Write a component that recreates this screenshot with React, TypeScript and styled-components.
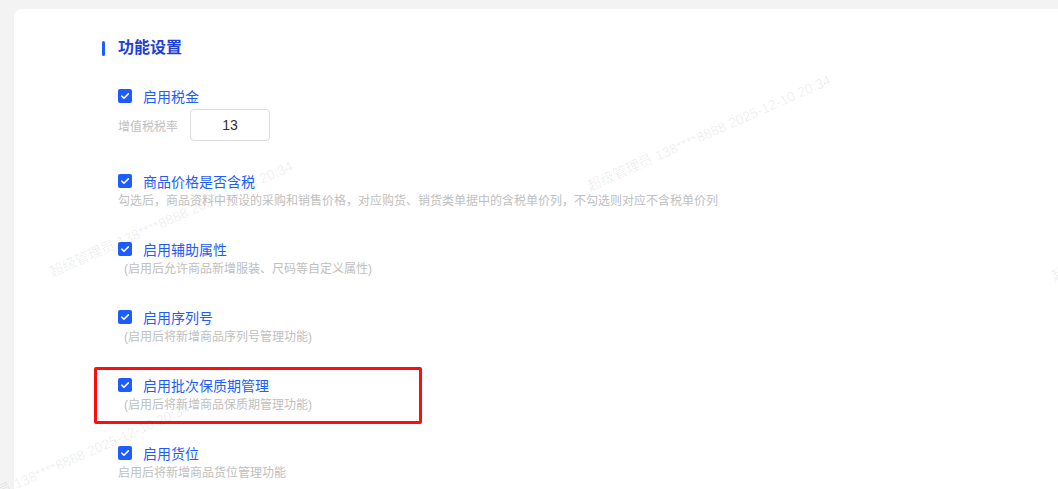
import React from 'react';
import styled, { createGlobalStyle } from 'styled-components';

const GlobalStyle = createGlobalStyle`
  html, body {
    margin: 0;
    padding: 0;
    background: #f3f3f3;
    overflow: hidden;
  }
  body {
    font-family: "Liberation Sans", "Noto Sans CJK SC", sans-serif;
  }
`;

const Page = styled.div`
  position: relative;
  height: 489px;
  padding: 9px 0 0 14px;
  box-sizing: border-box;
  overflow: hidden;
`;

const Card = styled.section`
  background: #ffffff;
  border-radius: 8px 0 0 0;
  height: 100%;
  padding: 27px 0 0 88px;
  box-sizing: border-box;
`;

const SectionTitle = styled.h2`
  margin: 0;
  display: flex;
  align-items: center;
  gap: 13px;
  font-size: 16px;
  line-height: 24px;
  font-weight: 600;
  color: #1e3fd6;

  &::before {
    content: '';
    width: 3px;
    height: 15px;
    border-radius: 2px;
    background: #1d5cff;
  }
`;

const ItemList = styled.div`
  margin-top: 26px;
  padding-left: 16px;
  display: flex;
  flex-direction: column;
  gap: 28px;
`;

const Item = styled.div`
  position: relative;
  display: flex;
  flex-direction: column;
`;

const CheckLine = styled.label`
  display: flex;
  align-items: center;
  gap: 11px;
  height: 20px;
  font-size: 14px;
  color: #1d5cff;
`;

const Box = styled.span`
  width: 14px;
  height: 14px;
  border-radius: 2px;
  background: #1d5cff;
  display: flex;
  align-items: center;
  justify-content: center;
  flex: none;
`;

const Desc = styled.div<{ $indent?: number }>`
  font-size: 12px;
  line-height: 20px;
  color: #c0c0c0;
  padding-left: ${p => p.$indent ?? 0}px;
  white-space: nowrap;
`;

const TaxRow = styled.div`
  display: flex;
  align-items: center;
  gap: 12px;
  margin-top: 3px;
  margin-bottom: 2px;
`;

const TaxLabel = styled.span`
  font-size: 12px;
  color: #c0c0c0;
`;

const TaxInput = styled.input`
  width: 80px;
  height: 32px;
  box-sizing: border-box;
  border: 1px solid #dcdcdc;
  border-radius: 4px;
  text-align: center;
  font-family: "Liberation Sans", "Noto Sans CJK SC", sans-serif;
  font-size: 14px;
  color: #333333;
  outline: none;
  padding: 0;
  background: #fff;
`;

const Highlight = styled.div`
  position: absolute;
  left: -24px;
  top: -8px;
  width: 328px;
  height: 57px;
  border: 3px solid #ff0d0d;
  border-radius: 2px;
  box-sizing: border-box;
  pointer-events: none;
`;

const Watermark = styled.span<{ $x: number; $y: number }>`
  position: absolute;
  left: ${p => p.$x}px;
  top: ${p => p.$y - 14}px;
  font-size: 14px;
  line-height: 14px;
  white-space: nowrap;
  color: rgba(0, 0, 0, 0.08);
  transform-origin: 0 100%;
  transform: rotate(-24deg);
  pointer-events: none;
`;

const Check: React.FC = () => (
  <Box>
    <svg width="10" height="10" viewBox="0 0 10 10" fill="none">
      <path d="M1.8 5.1 L4 7.2 L8.3 2.9" stroke="#fff" strokeWidth="1.5" strokeLinecap="round" strokeLinejoin="round" />
    </svg>
  </Box>
);

type Setting = { label: string; desc?: string; indent?: number; highlight?: boolean };

const settings: Setting[] = [
  { label: '商品价格是否含税', desc: '勾选后，商品资料中预设的采购和销售价格，对应购货、销货类单据中的含税单价列，不勾选则对应不含税单价列' },
  { label: '启用辅助属性', desc: '(启用后允许商品新增服装、尺码等自定义属性)', indent: 6 },
  { label: '启用序列号', desc: '(启用后将新增商品序列号管理功能)', indent: 6 },
  { label: '启用批次保质期管理', desc: '(启用后将新增商品保质期管理功能)', indent: 6, highlight: true },
  { label: '启用货位', desc: '启用后将新增商品货位管理功能' },
];

const marks = [
  { x: 53, y: 279 },
  { x: 591, y: 193 },
  { x: -50, y: 521 },
  { x: 1055, y: 283 },
];

const WM_TEXT = '超级管理员 138****8888 2025-12-10 20:34';

export default function App() {
  return (
    <>
      <GlobalStyle />
      <Page>
        <Card>
          <SectionTitle>功能设置</SectionTitle>
          <ItemList>
            <Item>
              <CheckLine>
                <Check />
                启用税金
              </CheckLine>
              <TaxRow>
                <TaxLabel>增值税税率</TaxLabel>
                <TaxInput readOnly value="13" />
              </TaxRow>
            </Item>
            {settings.map(s => (
              <Item key={s.label}>
                <CheckLine>
                  <Check />
                  {s.label}
                </CheckLine>
                {s.desc && <Desc $indent={s.indent}>{s.desc}</Desc>}
                {s.highlight && <Highlight />}
              </Item>
            ))}
          </ItemList>
        </Card>
        {marks.map((m, i) => (
          <Watermark key={i} $x={m.x} $y={m.y}>{WM_TEXT}</Watermark>
        ))}
      </Page>
    </>
  );
}
